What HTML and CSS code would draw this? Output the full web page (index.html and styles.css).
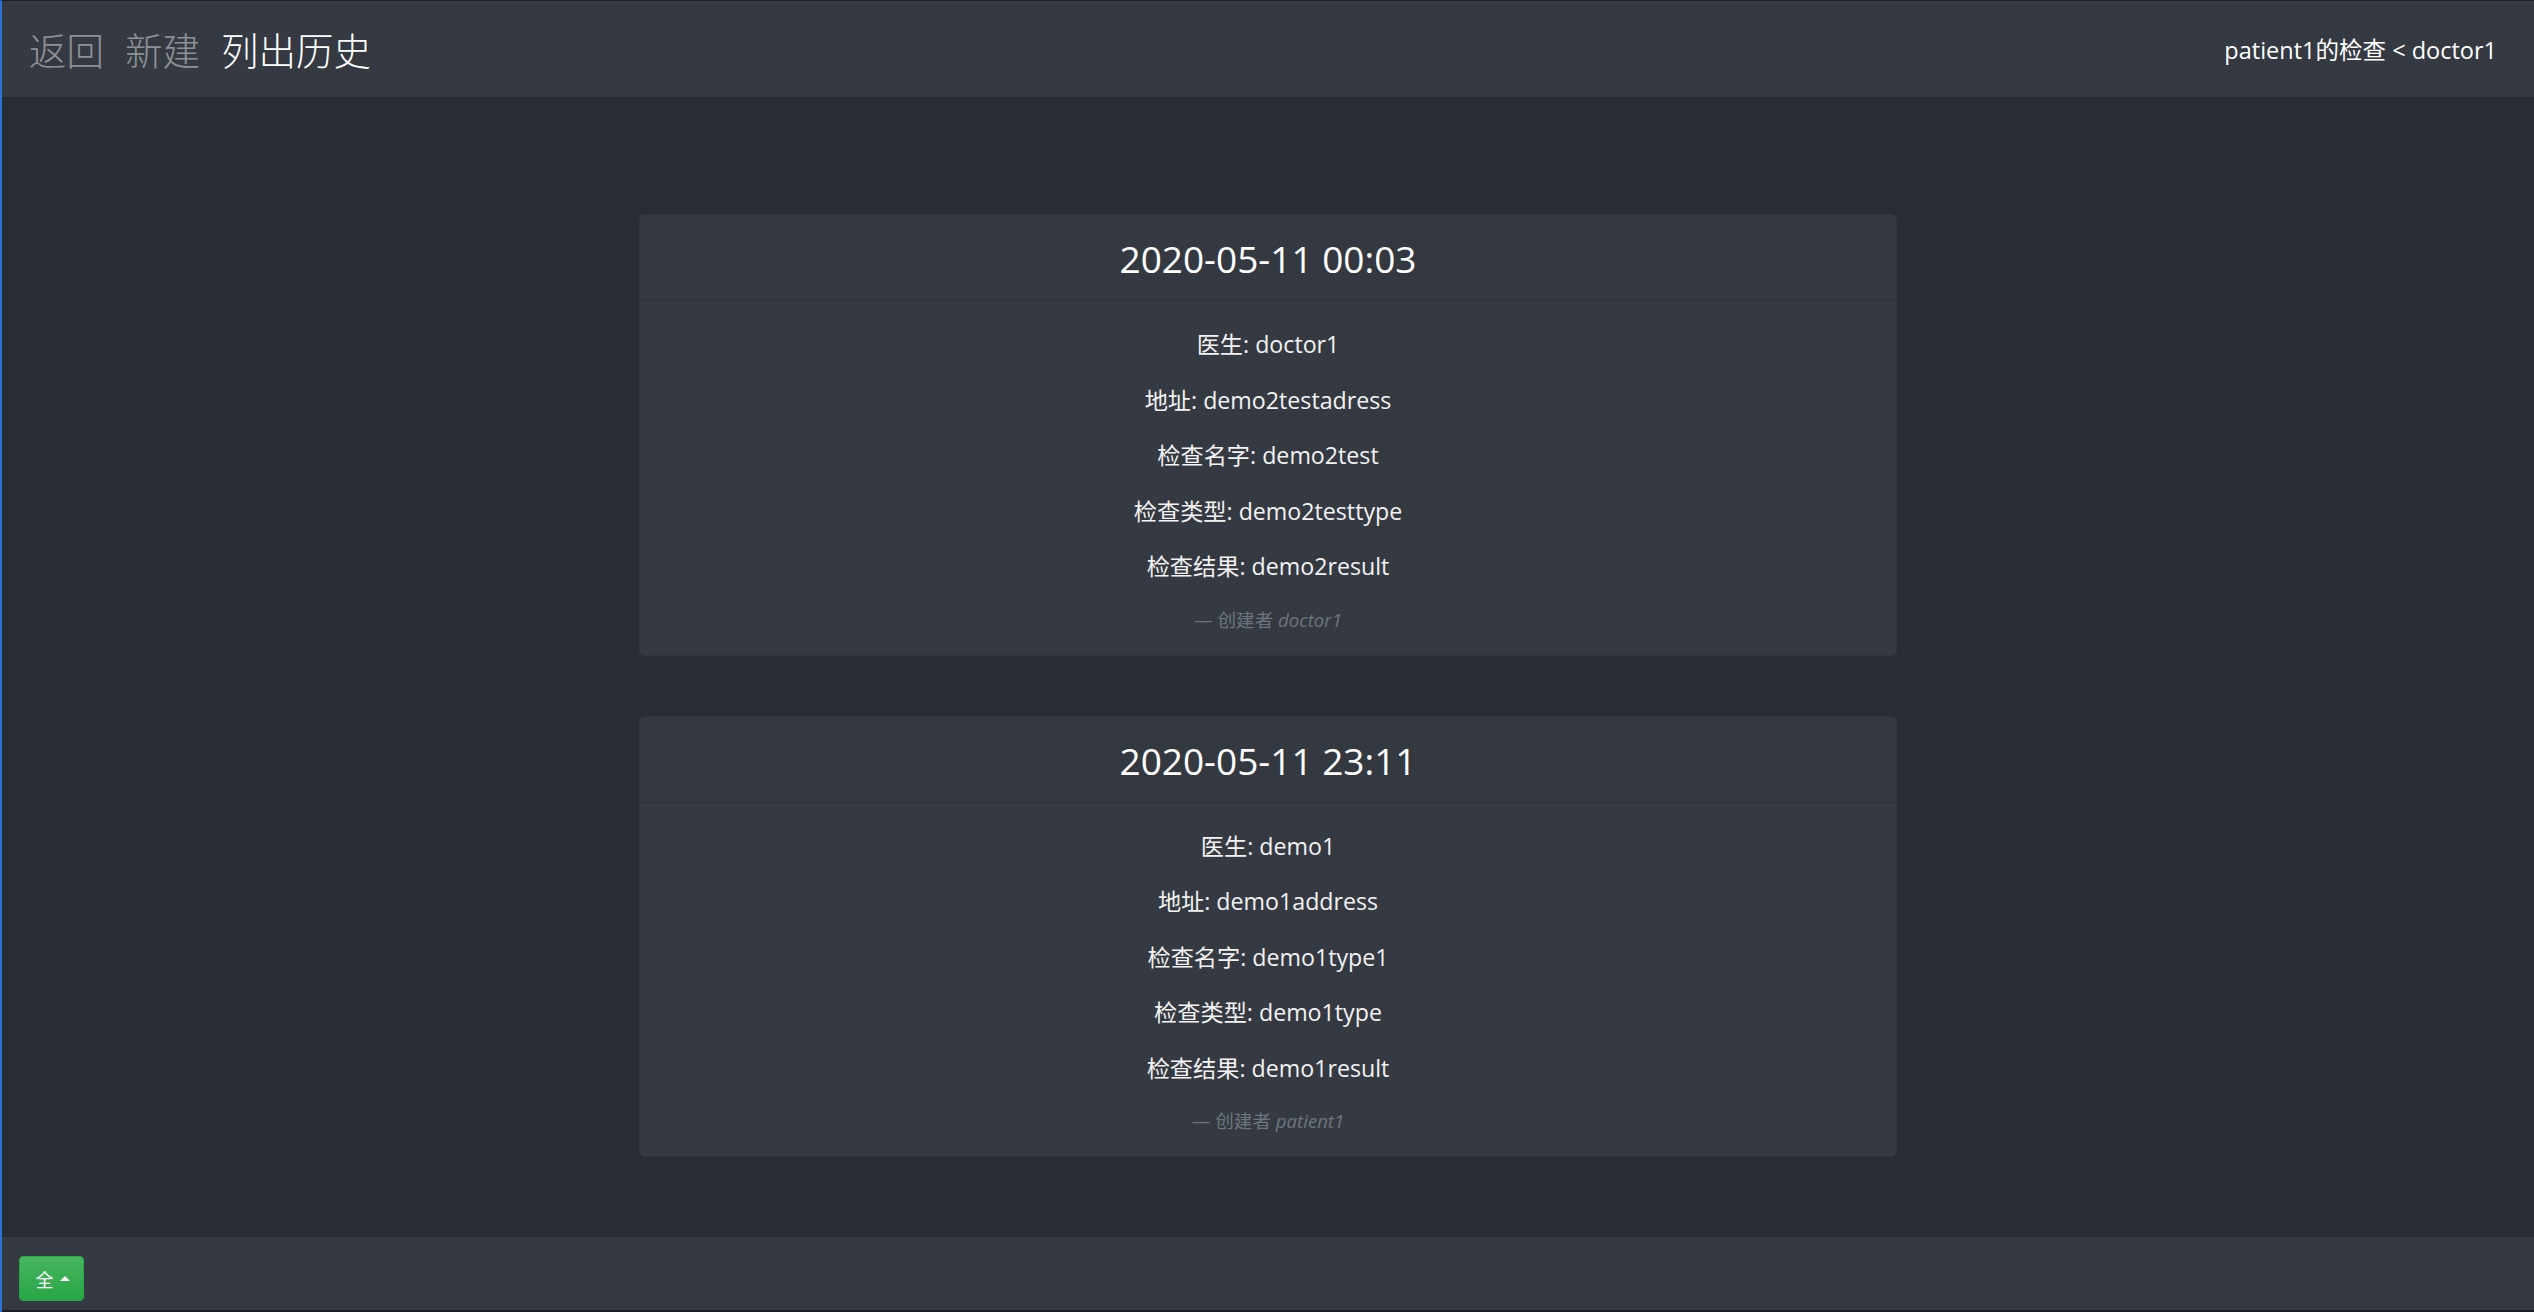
FILE: index.html
```html
<!DOCTYPE html>
<html lang="zh">
<head>
<meta charset="utf-8">
<title>列出历史</title>
<link rel="stylesheet" href="styles.css">
</head>
<body>
<div class="frame">
  <header class="topbar">
    <nav class="nav">
      <a class="nav-link">返回</a>
      <a class="nav-link">新建</a>
      <a class="nav-link active">列出历史</a>
    </nav>
    <div class="who">patient1的检查 &lt; doctor1</div>
  </header>
  <main class="main">
    <section class="card">
      <div class="card-header">2020-05-11 00:03</div>
      <div class="card-body">
        <p>医生: doctor1</p>
        <p>地址: demo2testadress</p>
        <p>检查名字: demo2test</p>
        <p>检查类型: demo2testtype</p>
        <p>检查结果: demo2result</p>
        <div class="quote-footer">— 创建者 <cite>doctor1</cite></div>
      </div>
    </section>
    <section class="card">
      <div class="card-header">2020-05-11 23:11</div>
      <div class="card-body">
        <p>医生: demo1</p>
        <p>地址: demo1address</p>
        <p>检查名字: demo1type1</p>
        <p>检查类型: demo1type</p>
        <p>检查结果: demo1result</p>
        <div class="quote-footer">— 创建者 <cite>patient1</cite></div>
      </div>
    </section>
  </main>
  <footer class="bottombar">
    <button class="btn-success">全<span class="caret"></span></button>
  </footer>
  <div class="strip"></div>
</div>
</body>
</html>
```
FILE: styles.css
```css
html, body {
  margin: 0;
  padding: 0;
  height: 100%;
  background: #282c34;
}
body {
  font-family: "Open Sans", "Noto Sans CJK SC", sans-serif;
  color: #f2f2f2;
  overflow: hidden;
}
.frame {
  height: 100vh;
  box-sizing: border-box;
  border-left: 2px solid #2a72d8;
  border-top: 1px solid #1f2228;
  display: flex;
  flex-direction: column;
}
.topbar {
  height: 96px;
  flex: none;
  background: #353a42;
  display: flex;
  align-items: center;
  justify-content: space-between;
  padding: 0 37px 0 27px;
}
.nav {
  display: flex;
  gap: 21px;
  align-items: center;
}
.nav-link {
  font-family: "Noto Sans CJK SC", sans-serif;
  font-size: 37.5px;
  font-weight: 300;
  line-height: 1;
  color: rgba(255, 255, 255, 0.45);
}
.nav-link.active {
  color: #ffffff;
}
.who {
  font-size: 23.5px;
  color: #ffffff;
}
.main {
  flex: 1;
  display: flex;
  flex-direction: column;
  align-items: center;
  gap: 60px;
  padding-top: 117px;
  overflow: hidden;
}
.card {
  width: 1258px;
  box-sizing: border-box;
  background: #353a42;
  border: 1px solid #30353c;
  border-radius: 5px;
  text-align: center;
}
.card-header {
  font-size: 37px;
  line-height: 52px;
  padding: 18px 0 15px;
  color: #ffffff;
  background: #343840;
  border-bottom: 1px solid #2d3137;
  border-radius: 5px 5px 0 0;
}
.card-body {
  padding: 27px 0 22px;
}
.card-body p {
  margin: 0 0 22.5px;
  font-size: 23.2px;
  line-height: 33px;
}
.quote-footer {
  font-size: 18.6px;
  line-height: 27px;
  color: #6c757d;
}
.quote-footer cite {
  font-style: italic;
}
.bottombar {
  height: 73px;
  flex: none;
  background: #353a42;
  padding: 19px 0 0 17px;
  box-sizing: border-box;
}
.btn-success {
  width: 65px;
  height: 45px;
  border: 1px solid #28a745;
  border-radius: 4px;
  background: linear-gradient(#48b461, #28a745);
  color: #ffffff;
  font-family: "Noto Sans CJK SC", sans-serif;
  font-size: 18px;
  display: flex;
  align-items: center;
  justify-content: center;
  gap: 6px;
  padding: 0 0 0 2px;
}
.caret {
  width: 0;
  height: 0;
  border-left: 5px solid transparent;
  border-right: 5px solid transparent;
  border-bottom: 5px solid #ffffff;
}
.strip {
  height: 2px;
  flex: none;
  background: #1d1d22;
}
```
